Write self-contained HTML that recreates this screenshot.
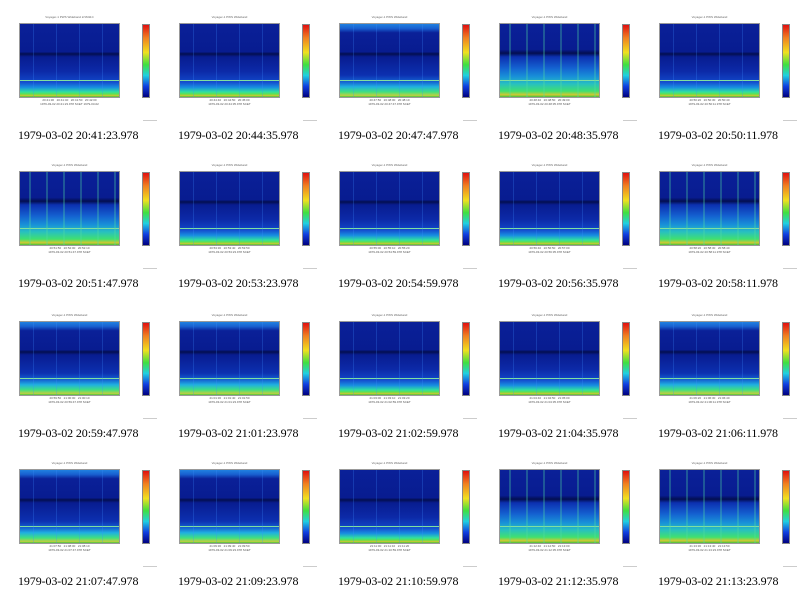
<!DOCTYPE html>
<html><head><meta charset="utf-8"><style>
body{margin:0;width:800px;height:596px;background:#fff;position:relative;overflow:hidden}
.c{position:absolute;width:160px;height:149px}
.t{position:absolute;left:20px;top:15px;width:99px;text-align:center;font:3px "Liberation Sans",sans-serif;color:#666}
.p{position:absolute;left:20px;top:24px;width:99px;height:73px;outline:1px solid #999;
background:
repeating-linear-gradient(to right,rgba(0,0,0,0) 0px,rgba(0,0,0,0) 13px,rgba(60,140,255,.25) 13px,rgba(60,140,255,.25) 14px,rgba(0,0,0,0) 14px,rgba(0,0,0,0) 23px),
linear-gradient(to bottom,rgba(0,0,0,0) 0%,rgba(0,0,0,0) 76.5%,#7fe0a0 76.5%,#7fe0a0 78%,rgba(0,0,0,0) 78%),
linear-gradient(to bottom,#0a2098 0%,#081c90 38%,#030e50 41%,#081c90 45%,#0c2aa8 65%,#1040c0 76%,#1450d0 80%,#1890e0 87%,#30e0a0 93%,#60e050 96%,#d0c830 98%,#40c040 100%)}
.g .p{background:
repeating-linear-gradient(to right,rgba(0,0,0,0) 0px,rgba(0,0,0,0) 9px,rgba(80,220,160,.3) 9px,rgba(80,220,160,.3) 11px,rgba(0,0,0,0) 11px,rgba(0,0,0,0) 17px),
linear-gradient(to bottom,rgba(0,0,0,0) 0%,rgba(0,0,0,0) 76.5%,#7fe0a0 76.5%,#7fe0a0 78%,rgba(0,0,0,0) 78%),
linear-gradient(to bottom,#0a2098 0%,#081c90 35%,#030e50 40%,#0c30b0 45%,#1460d0 60%,#1890d8 72%,#28c0c0 82%,#40e070 92%,#d0c830 97%,#40c040 100%)}
.h .p{background:
repeating-linear-gradient(to right,rgba(0,0,0,0) 0px,rgba(0,0,0,0) 13px,rgba(60,140,255,.25) 13px,rgba(60,140,255,.25) 14px,rgba(0,0,0,0) 14px,rgba(0,0,0,0) 23px),
linear-gradient(to bottom,rgba(0,0,0,0) 0%,rgba(0,0,0,0) 76.5%,#7fe0a0 76.5%,#7fe0a0 78%,rgba(0,0,0,0) 78%),
linear-gradient(to bottom,#2080e0 0%,#1860d0 6%,#0a2098 12%,#081c90 38%,#030e50 41%,#081c90 45%,#0c30b0 70%,#1460d0 79%,#20b0e0 86%,#40e080 93%,#c0d040 98%,#40c040 100%)}
.b{position:absolute;left:143px;top:25px;width:6px;height:72px;outline:1px solid #888;background:linear-gradient(to bottom,#e01010,#f08020 18%,#f0e020 38%,#40e040 55%,#20d0e0 70%,#1040e0 85%,#000080)}
.a{position:absolute;left:20px;top:98px;width:99px;font:3px "Liberation Sans",sans-serif;color:#555;text-align:center;line-height:4px}
.cap{position:absolute;left:18px;top:128px;font:12px "Liberation Serif",serif;letter-spacing:-0.1px;color:#000;white-space:nowrap}
.s{position:absolute;left:143px;top:120px;width:14px;height:1px;background:#ccc}
</style></head><body>

<div class="c" style="left:0;top:0"><div class="t">Voyager-1 PWS Wideband 2/1M11C</div><div class="p"></div><div class="b"></div><div class="a">20:41:30 &nbsp; 20:41:40 &nbsp; 20:41:50 &nbsp; 20:42:00<br>1979-03-02 20:41:23.978 SCET 1979-03-02</div><div class="s"></div><div class="cap">1979-03-02 20:41:23.978</div></div>
<div class="c" style="left:160px;top:0"><div class="t">Voyager-1 PWS Wideband</div><div class="p"></div><div class="b"></div><div class="a">20:44:40 &nbsp; 20:44:50 &nbsp; 20:45:00<br>1979-03-02 20:44:35.978 SCET</div><div class="s"></div><div class="cap">1979-03-02 20:44:35.978</div></div>
<div class="c h g" style="left:320px;top:0"><div class="t">Voyager-1 PWS Wideband</div><div class="p"></div><div class="b"></div><div class="a">20:47:50 &nbsp; 20:48:00 &nbsp; 20:48:10<br>1979-03-02 20:47:47.978 SCET</div><div class="s"></div><div class="cap">1979-03-02 20:47:47.978</div></div>
<div class="c g" style="left:480px;top:0"><div class="t">Voyager-1 PWS Wideband</div><div class="p"></div><div class="b"></div><div class="a">20:48:40 &nbsp; 20:48:50 &nbsp; 20:49:00<br>1979-03-02 20:48:35.978 SCET</div><div class="s"></div><div class="cap">1979-03-02 20:48:35.978</div></div>
<div class="c" style="left:640px;top:0"><div class="t">Voyager-1 PWS Wideband</div><div class="p"></div><div class="b"></div><div class="a">20:50:20 &nbsp; 20:50:30 &nbsp; 20:50:40<br>1979-03-02 20:50:11.978 SCET</div><div class="s"></div><div class="cap">1979-03-02 20:50:11.978</div></div>

<div class="c g" style="left:0;top:148px"><div class="t">Voyager-1 PWS Wideband</div><div class="p"></div><div class="b"></div><div class="a">20:51:50 &nbsp; 20:52:00 &nbsp; 20:52:10<br>1979-03-02 20:51:47.978 SCET</div><div class="s"></div><div class="cap">1979-03-02 20:51:47.978</div></div>
<div class="c" style="left:160px;top:148px"><div class="t">Voyager-1 PWS Wideband</div><div class="p"></div><div class="b"></div><div class="a">20:53:30 &nbsp; 20:53:40 &nbsp; 20:53:50<br>1979-03-02 20:53:23.978 SCET</div><div class="s"></div><div class="cap">1979-03-02 20:53:23.978</div></div>
<div class="c" style="left:320px;top:148px"><div class="t">Voyager-1 PWS Wideband</div><div class="p"></div><div class="b"></div><div class="a">20:55:00 &nbsp; 20:55:10 &nbsp; 20:55:20<br>1979-03-02 20:54:59.978 SCET</div><div class="s"></div><div class="cap">1979-03-02 20:54:59.978</div></div>
<div class="c" style="left:480px;top:148px"><div class="t">Voyager-1 PWS Wideband</div><div class="p"></div><div class="b"></div><div class="a">20:56:40 &nbsp; 20:56:50 &nbsp; 20:57:00<br>1979-03-02 20:56:35.978 SCET</div><div class="s"></div><div class="cap">1979-03-02 20:56:35.978</div></div>
<div class="c g" style="left:640px;top:148px"><div class="t">Voyager-1 PWS Wideband</div><div class="p"></div><div class="b"></div><div class="a">20:58:20 &nbsp; 20:58:30 &nbsp; 20:58:40<br>1979-03-02 20:58:11.978 SCET</div><div class="s"></div><div class="cap">1979-03-02 20:58:11.978</div></div>

<div class="c h" style="left:0;top:298px"><div class="t">Voyager-1 PWS Wideband</div><div class="p"></div><div class="b"></div><div class="a">20:59:50 &nbsp; 21:00:00 &nbsp; 21:00:10<br>1979-03-02 20:59:47.978 SCET</div><div class="s"></div><div class="cap">1979-03-02 20:59:47.978</div></div>
<div class="c h" style="left:160px;top:298px"><div class="t">Voyager-1 PWS Wideband</div><div class="p"></div><div class="b"></div><div class="a">21:01:30 &nbsp; 21:01:40 &nbsp; 21:01:50<br>1979-03-02 21:01:23.978 SCET</div><div class="s"></div><div class="cap">1979-03-02 21:01:23.978</div></div>
<div class="c" style="left:320px;top:298px"><div class="t">Voyager-1 PWS Wideband</div><div class="p"></div><div class="b"></div><div class="a">21:03:00 &nbsp; 21:03:10 &nbsp; 21:03:20<br>1979-03-02 21:02:59.978 SCET</div><div class="s"></div><div class="cap">1979-03-02 21:02:59.978</div></div>
<div class="c" style="left:480px;top:298px"><div class="t">Voyager-1 PWS Wideband</div><div class="p"></div><div class="b"></div><div class="a">21:04:40 &nbsp; 21:04:50 &nbsp; 21:05:00<br>1979-03-02 21:04:35.978 SCET</div><div class="s"></div><div class="cap">1979-03-02 21:04:35.978</div></div>
<div class="c h" style="left:640px;top:298px"><div class="t">Voyager-1 PWS Wideband</div><div class="p"></div><div class="b"></div><div class="a">21:06:20 &nbsp; 21:06:30 &nbsp; 21:06:40<br>1979-03-02 21:06:11.978 SCET</div><div class="s"></div><div class="cap">1979-03-02 21:06:11.978</div></div>

<div class="c h" style="left:0;top:446px"><div class="t">Voyager-1 PWS Wideband</div><div class="p"></div><div class="b"></div><div class="a">21:07:50 &nbsp; 21:08:00 &nbsp; 21:08:10<br>1979-03-02 21:07:47.978 SCET</div><div class="s"></div><div class="cap">1979-03-02 21:07:47.978</div></div>
<div class="c h" style="left:160px;top:446px"><div class="t">Voyager-1 PWS Wideband</div><div class="p"></div><div class="b"></div><div class="a">21:09:30 &nbsp; 21:09:40 &nbsp; 21:09:50<br>1979-03-02 21:09:23.978 SCET</div><div class="s"></div><div class="cap">1979-03-02 21:09:23.978</div></div>
<div class="c" style="left:320px;top:446px"><div class="t">Voyager-1 PWS Wideband</div><div class="p"></div><div class="b"></div><div class="a">21:11:00 &nbsp; 21:11:10 &nbsp; 21:11:20<br>1979-03-02 21:10:59.978 SCET</div><div class="s"></div><div class="cap">1979-03-02 21:10:59.978</div></div>
<div class="c g" style="left:480px;top:446px"><div class="t">Voyager-1 PWS Wideband</div><div class="p"></div><div class="b"></div><div class="a">21:12:40 &nbsp; 21:12:50 &nbsp; 21:13:00<br>1979-03-02 21:12:35.978 SCET</div><div class="s"></div><div class="cap">1979-03-02 21:12:35.978</div></div>
<div class="c g" style="left:640px;top:446px"><div class="t">Voyager-1 PWS Wideband</div><div class="p"></div><div class="b"></div><div class="a">21:13:30 &nbsp; 21:13:40 &nbsp; 21:13:50<br>1979-03-02 21:13:23.978 SCET</div><div class="s"></div><div class="cap">1979-03-02 21:13:23.978</div></div>

</body></html>
